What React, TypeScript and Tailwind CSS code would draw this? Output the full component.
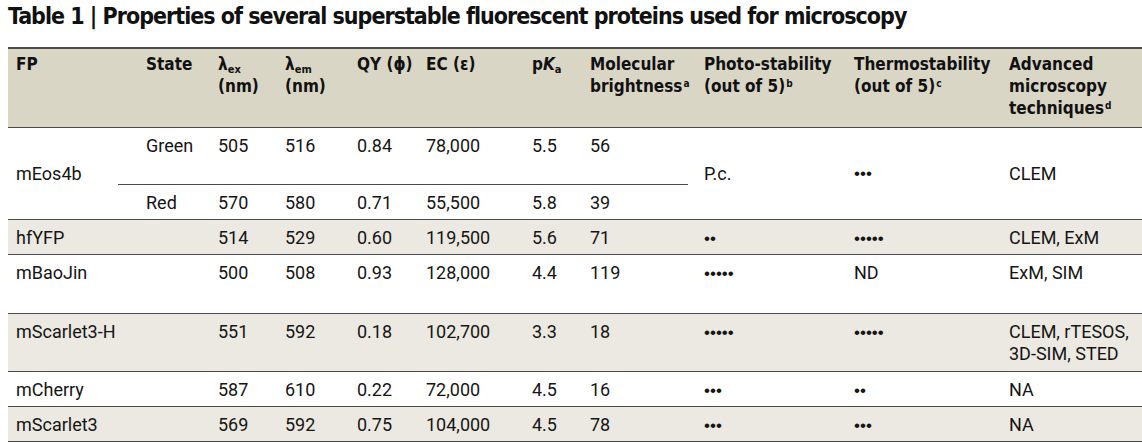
import React from 'react'

const narrow = "font-['DejaVu_Sans_Condensed','Liberation_Sans_Narrow',sans-serif]"
const body = "font-['Roboto','Liberation_Sans',Arial,sans-serif]"

const Sup = ({ children }: { children: React.ReactNode }) => (
  <sup className="text-[10px] ml-[1px]">{children}</sup>
)

const Sub = ({ children }: { children: React.ReactNode }) => <sub className="text-[11px]">{children}</sub>

const Dots = ({ n }: { n: number }) => (
  <span className="font-['Liberation_Sans',sans-serif] text-[17px]">{'•'.repeat(n)}</span>
)

type Row = {
  fp: string
  ex: string
  em: string
  qy: string
  ec: string
  pka: string
  mb: string
  photo: React.ReactNode
  thermo: React.ReactNode
  adv: React.ReactNode
  h: string
  shade: boolean
}

const rows: Row[] = [
  { fp: 'hfYFP', ex: '514', em: '529', qy: '0.60', ec: '119,500', pka: '5.6', mb: '71', photo: <Dots n={2} />, thermo: <Dots n={5} />, adv: 'CLEM, ExM', h: 'h-[35px]', shade: true },
  { fp: 'mBaoJin', ex: '500', em: '508', qy: '0.93', ec: '128,000', pka: '4.4', mb: '119', photo: <Dots n={5} />, thermo: 'ND', adv: 'ExM, SIM', h: 'h-[59px]', shade: false },
  {
    fp: 'mScarlet3-H',
    ex: '551',
    em: '592',
    qy: '0.18',
    ec: '102,700',
    pka: '3.3',
    mb: '18',
    photo: <Dots n={5} />,
    thermo: <Dots n={5} />,
    adv: (
      <>
        CLEM, rTESOS,
        <br />
        3D-SIM, STED
      </>
    ),
    h: 'h-[58px]',
    shade: true,
  },
  { fp: 'mCherry', ex: '587', em: '610', qy: '0.22', ec: '72,000', pka: '4.5', mb: '16', photo: <Dots n={3} />, thermo: <Dots n={2} />, adv: 'NA', h: 'h-[35px]', shade: false },
  { fp: 'mScarlet3', ex: '569', em: '592', qy: '0.75', ec: '104,000', pka: '4.5', mb: '78', photo: <Dots n={3} />, thermo: <Dots n={3} />, adv: 'NA', h: 'h-[35px]', shade: true },
]

const td = 'align-top pt-[7px] pl-[8px] leading-[22px]'
const th = 'align-top text-left pt-[4px] pl-[8px] font-bold'
const line = 'border-b border-[#4a4a4a]'

export default function App() {
  return (
    <div className={`w-[1142px] h-[442px] bg-white text-[#151515] overflow-hidden ${body}`}>
      <h1 className={`${narrow} font-bold text-[23px] leading-[28px] pl-[8px] pt-[2px] h-[47px] tracking-[-1px] text-[#111]`}>
        Table 1 | Properties of several superstable fluorescent proteins used for microscopy
      </h1>
      <table className="ml-[8px] w-[1134px] table-fixed border-collapse text-[18px]">
        <colgroup>
          <col className="w-[110px]" />
          <col className="w-[92px]" />
          <col className="w-[67px]" />
          <col className="w-[72px]" />
          <col className="w-[69px]" />
          <col className="w-[106px]" />
          <col className="w-[58px]" />
          <col className="w-[106px]" />
          <col className="w-[158px]" />
          <col className="w-[155px]" />
          <col className="w-[141px]" />
        </colgroup>
        <thead>
          <tr className={`h-[79px] bg-[#d9d6c6] border-t-2 border-b border-[#4a4a4a] ${narrow} font-bold text-[17px] leading-[22px] text-[#111]`}>
            <th className={th}>FP</th>
            <th className={`${th} pl-[28px]`}>State</th>
            <th className={th}>
              λ<Sub>ex</Sub>
              <br />
              (nm)
            </th>
            <th className={th}>
              λ<Sub>em</Sub>
              <br />
              (nm)
            </th>
            <th className={th}>QY (ϕ)</th>
            <th className={th}>EC (ε)</th>
            <th className={th}>
              p<i>K</i>
              <Sub>a</Sub>
            </th>
            <th className={th}>
              Molecular
              <br />
              brightness<Sup>a</Sup>
            </th>
            <th className={`${th} pl-[16px]`}>
              Photo-stability
              <br />
              (out of 5)<Sup>b</Sup>
            </th>
            <th className={th}>
              Thermostability
              <br />
              (out of 5)<Sup>c</Sup>
            </th>
            <th className={th}>
              Advanced
              <br />
              microscopy
              <br />
              techniques<Sup>d</Sup>
            </th>
          </tr>
        </thead>
        <tbody>
          <tr className="h-[57px]">
            <td rowSpan={2} className={`align-middle pl-[8px] ${line}`}>mEos4b</td>
            <td className={`${td} pl-[28px] ${line}`}>Green</td>
            <td className={`${td} ${line}`}>505</td>
            <td className={`${td} ${line}`}>516</td>
            <td className={`${td} ${line}`}>0.84</td>
            <td className={`${td} ${line}`}>78,000</td>
            <td className={`${td} ${line}`}>5.5</td>
            <td className={`${td} ${line}`}>56</td>
            <td rowSpan={2} className={`align-middle pl-[16px] ${line}`}>P.c.</td>
            <td rowSpan={2} className={`align-middle pl-[8px] ${line}`}>
              <Dots n={3} />
            </td>
            <td rowSpan={2} className={`align-middle pl-[8px] ${line}`}>CLEM</td>
          </tr>
          <tr className={`h-[35px] ${line}`}>
            <td className={`${td} pl-[28px]`}>Red</td>
            <td className={td}>570</td>
            <td className={td}>580</td>
            <td className={td}>0.71</td>
            <td className={td}>55,500</td>
            <td className={td}>5.8</td>
            <td className={td}>39</td>
          </tr>
          {rows.map((r) => (
            <tr key={r.fp} className={`${r.h} ${line} ${r.shade ? 'bg-[#ebe9e1]' : 'bg-white'}`}>
              <td className={td}>{r.fp}</td>
              <td className={td}></td>
              <td className={td}>{r.ex}</td>
              <td className={td}>{r.em}</td>
              <td className={td}>{r.qy}</td>
              <td className={td}>{r.ec}</td>
              <td className={td}>{r.pka}</td>
              <td className={td}>{r.mb}</td>
              <td className={`${td} pl-[16px]`}>{r.photo}</td>
              <td className={td}>{r.thermo}</td>
              <td className={td}>{r.adv}</td>
            </tr>
          ))}
        </tbody>
      </table>
    </div>
  )
}
